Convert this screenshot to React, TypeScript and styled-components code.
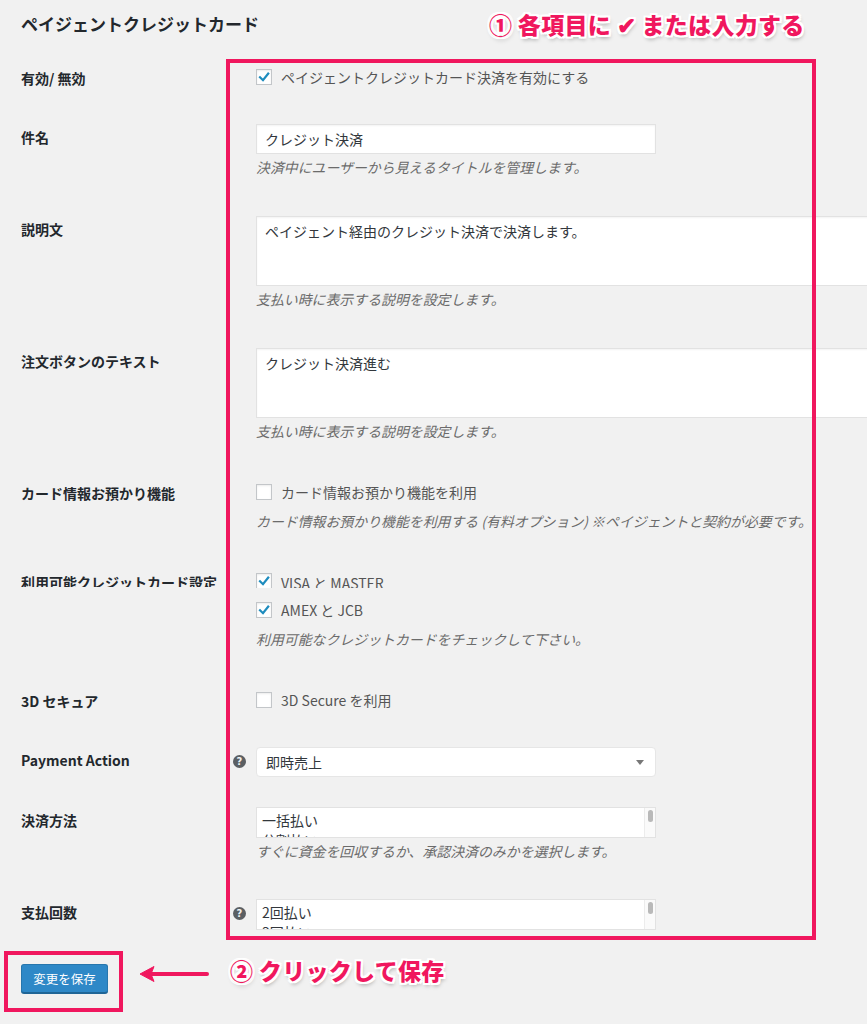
import React from "react";
import styled, { createGlobalStyle } from "styled-components";

const PINK = "#f0175e";
const FONT = `"Noto Sans CJK JP", "Noto Sans", "Liberation Sans", sans-serif`;

const Global = createGlobalStyle`
  html, body { margin: 0; padding: 0; background: #f1f1f1; }
  body { font-family: ${FONT}; color: #444; overflow-x: hidden; }
  * { box-sizing: border-box; }
`;

const Page = styled.div`
  position: relative;
  width: 867px;
  min-height: 1024px;
  overflow: hidden;
  background: #f1f1f1;
`;

const Header = styled.div`
  display: grid;
  grid-template-columns: 468px 1fr;
  align-items: center;
  height: 48px;
  padding-left: 21px;
`;

const Title = styled.h2`
  margin: 0;
  font-size: 17px;
  line-height: 24px;
  font-weight: 700;
  color: #23282d;
  white-space: nowrap;
`;

const Callout = styled.div`
  font-size: 23px;
  line-height: 30px;
  font-weight: 900;
  color: ${PINK};
  white-space: nowrap;
  letter-spacing: 0.3px;
  text-shadow: -2px -2px 0 #fff, 2px -2px 0 #fff, -2px 2px 0 #fff, 2px 2px 0 #fff,
    0 -2px 0 #fff, 0 2px 0 #fff, -2px 0 0 #fff, 2px 0 0 #fff,
    1px 3px 4px rgba(0, 0, 0, 0.35);
`;

const Row = styled.div<{ $gap: number }>`
  display: grid;
  grid-template-columns: 212px 23px 1fr;
  align-items: start;
  margin-top: ${(p) => p.$gap}px;
  padding-left: 21px;
`;

const Label = styled.div<{ $clip?: boolean }>`
  font-size: 14px;
  line-height: 26px;
  font-weight: 700;
  color: #23282d;
  white-space: nowrap;
  ${(p) => (p.$clip ? "height: 18px; overflow: hidden;" : "")}
`;

const HelpCell = styled.div`
  padding-top: 8px;
`;

const HelpIcon = styled.span`
  display: flex;
  align-items: center;
  justify-content: center;
  width: 13px;
  height: 13px;
  border-radius: 50%;
  background: #5b5f63;
  color: #f1f1f1;
  font-size: 10px;
  line-height: 1;
  font-weight: 700;
  font-family: "DejaVu Sans", sans-serif;
`;

const Field = styled.div`
  display: flex;
  flex-direction: column;
  align-items: flex-start;
`;

const CheckLine = styled.label<{ $clip?: boolean; $mt?: number }>`
  display: flex;
  align-items: center;
  gap: 9px;
  height: ${(p) => (p.$clip ? 19 : 24)}px;
  overflow: hidden;
  margin-top: ${(p) => p.$mt ?? 0}px;
  font-size: 14px;
  color: #555;
  white-space: nowrap;
  ${(p) => (p.$clip ? "align-items: flex-start; padding-top: 4px;" : "")}
`;

const Box = styled.span`
  display: inline-flex;
  align-items: center;
  justify-content: center;
  width: 16px;
  height: 16px;
  flex: 0 0 16px;
  background: #fff;
  border: 1px solid #c3c6c9;
  box-shadow: inset 0 1px 2px rgba(0, 0, 0, 0.08);
`;

const TextInput = styled.input`
  width: 400px;
  height: 30px;
  padding: 0 8px;
  border: 1px solid #e2e2e2;
  box-shadow: inset 0 1px 2px rgba(0, 0, 0, 0.05);
  background: #fff;
  font-family: ${FONT};
  font-size: 14px;
  color: #32373c;
  outline: none;
`;

const TextArea = styled.textarea`
  width: 650px;
  height: 70px;
  padding: 5px 8px;
  border: 1px solid #e2e2e2;
  box-shadow: inset 0 1px 2px rgba(0, 0, 0, 0.05);
  background: #fff;
  font-family: ${FONT};
  font-size: 14px;
  line-height: 18px;
  color: #32373c;
  resize: none;
  outline: none;
`;

const Desc = styled.p<{ $afterCheck?: boolean }>`
  margin: ${(p) => (p.$afterCheck ? 9 : 5)}px 0 0;
  font-size: 13.9px;
  line-height: 17px;
  font-style: italic;
  color: #6b6b6b;
  white-space: nowrap;
`;

const Select = styled.div`
  display: flex;
  align-items: center;
  justify-content: space-between;
  width: 400px;
  height: 30px;
  padding: 0 9px 0 9px;
  background: #fff;
  border: 1px solid #e6e6e6;
  border-radius: 4px;
  font-size: 14px;
  color: #32373c;
`;

const Caret = styled.span`
  width: 0;
  height: 0;
  border-left: 4px solid transparent;
  border-right: 4px solid transparent;
  border-top: 5px solid #777;
  margin-right: 2px;
`;

const MultiSelect = styled.div`
  display: flex;
  width: 400px;
  height: 31px;
  background: #fff;
  border: 1px solid #e2e2e2;
  overflow: hidden;
`;

const Options = styled.div`
  flex: 1;
  padding: 2px 5px 0;
  font-size: 14px;
  line-height: 20px;
  color: #32373c;
  overflow: hidden;
`;

const ScrollTrack = styled.div`
  width: 11px;
  border-left: 1px solid #ececec;
  background: #fafafa;
  display: flex;
  justify-content: center;
  padding-top: 2px;
`;

const Thumb = styled.span`
  display: block;
  width: 5px;
  height: 12px;
  border-radius: 3px;
  background: #b9b9b9;
`;

const SaveRow = styled.div`
  display: flex;
  align-items: flex-start;
  margin-top: 21px;
  padding-left: 4px;
`;

const SaveFrame = styled.div`
  border: 4px solid ${PINK};
  padding: 9px 11px 15px 13px;
`;

const SaveButton = styled.button`
  width: 87px;
  height: 29px;
  padding: 0;
  border: 1px solid #2776ad;
  border-bottom-color: #1f6596;
  border-radius: 3px;
  background: #2e88c7;
  box-shadow: 0 1px 0 #1f6596;
  color: #fff;
  font-family: ${FONT};
  font-size: 12.5px;
  line-height: 27px;
`;

const ArrowWrap = styled.div`
  margin: 14px 0 0 16px;
  display: flex;
`;

const Callout2 = styled(Callout)`
  margin: 4px 0 0 21px;
`;

const PinkFrame = styled.div`
  position: absolute;
  left: 226px;
  top: 59px;
  width: 590px;
  height: 881px;
  border: 4px solid ${PINK};
  pointer-events: none;
`;

const Check = () => (
  <svg width="14" height="14" viewBox="0 0 14 14">
    <path d="M3 7.2 L6 10.2 L11.2 3.6" fill="none" stroke="#1e8cbe" strokeWidth="2.2" strokeLinecap="square" />
  </svg>
);

const CheckBox = ({ checked }: { checked?: boolean }) => <Box>{checked ? <Check /> : null}</Box>;

const Arrow = () => (
  <svg width="70" height="18" viewBox="0 0 70 18">
    <path d="M68 9 H12" stroke={PINK} strokeWidth="4" strokeLinecap="round" />
    <path d="M1 9 L15 1.5 L12 9 L15 16.5 Z" fill={PINK} stroke={PINK} strokeWidth="1" strokeLinejoin="round" />
  </svg>
);

export default function App() {
  return (
    <Page>
      <Global />
      <Header>
        <Title>ペイジェントクレジットカード</Title>
        <Callout>① 各項目に ✔ または入力する</Callout>
      </Header>

      <Row $gap={17}>
        <Label>有効/ 無効</Label>
        <div />
        <Field>
          <CheckLine>
            <CheckBox checked />
            ペイジェントクレジットカード決済を有効にする
          </CheckLine>
        </Field>
      </Row>

      <Row $gap={33}>
        <Label>件名</Label>
        <div />
        <Field>
          <TextInput readOnly defaultValue="クレジット決済" />
          <Desc>決済中にユーザーから見えるタイトルを管理します。</Desc>
        </Field>
      </Row>

      <Row $gap={40}>
        <Label>説明文</Label>
        <div />
        <Field>
          <TextArea readOnly defaultValue="ペイジェント経由のクレジット決済で決済します。" />
          <Desc>支払い時に表示する説明を設定します。</Desc>
        </Field>
      </Row>

      <Row $gap={40}>
        <Label>注文ボタンのテキスト</Label>
        <div />
        <Field>
          <TextArea readOnly defaultValue="クレジット決済進む" />
          <Desc>支払い時に表示する説明を設定します。</Desc>
        </Field>
      </Row>

      <Row $gap={40}>
        <Label>カード情報お預かり機能</Label>
        <div />
        <Field>
          <CheckLine>
            <CheckBox />
            カード情報お預かり機能を利用
          </CheckLine>
          <Desc $afterCheck>カード情報お預かり機能を利用する (有料オプション) ※ペイジェントと契約が必要です。</Desc>
        </Field>
      </Row>

      <Row $gap={39}>
        <Label $clip>利用可能クレジットカード設定</Label>
        <div />
        <Field>
          <CheckLine $clip>
            <CheckBox checked />
            VISA と MASTER
          </CheckLine>
          <CheckLine $mt={10}>
            <CheckBox checked />
            AMEX と JCB
          </CheckLine>
          <Desc $afterCheck>利用可能なクレジットカードをチェックして下さい。</Desc>
        </Field>
      </Row>

      <Row $gap={40}>
        <Label>3D セキュア</Label>
        <div />
        <Field>
          <CheckLine>
            <CheckBox />
            3D Secure を利用
          </CheckLine>
        </Field>
      </Row>

      <Row $gap={33}>
        <Label>Payment Action</Label>
        <HelpCell>
          <HelpIcon>?</HelpIcon>
        </HelpCell>
        <Field>
          <Select>
            <span>即時売上</span>
            <Caret />
          </Select>
        </Field>
      </Row>

      <Row $gap={30}>
        <Label>決済方法</Label>
        <div />
        <Field>
          <MultiSelect>
            <Options>
              <div>一括払い</div>
              <div>分割払い</div>
            </Options>
            <ScrollTrack>
              <Thumb />
            </ScrollTrack>
          </MultiSelect>
          <Desc>すぐに資金を回収するか、承認決済のみかを選択します。</Desc>
        </Field>
      </Row>

      <Row $gap={39}>
        <Label>支払回数</Label>
        <HelpCell>
          <HelpIcon>?</HelpIcon>
        </HelpCell>
        <Field>
          <MultiSelect>
            <Options>
              <div>2回払い</div>
              <div>3回払い</div>
            </Options>
            <ScrollTrack>
              <Thumb />
            </ScrollTrack>
          </MultiSelect>
        </Field>
      </Row>

      <SaveRow>
        <SaveFrame>
          <SaveButton type="button">変更を保存</SaveButton>
        </SaveFrame>
        <ArrowWrap>
          <Arrow />
        </ArrowWrap>
        <Callout2>② クリックして保存</Callout2>
      </SaveRow>

      <PinkFrame />
    </Page>
  );
}
